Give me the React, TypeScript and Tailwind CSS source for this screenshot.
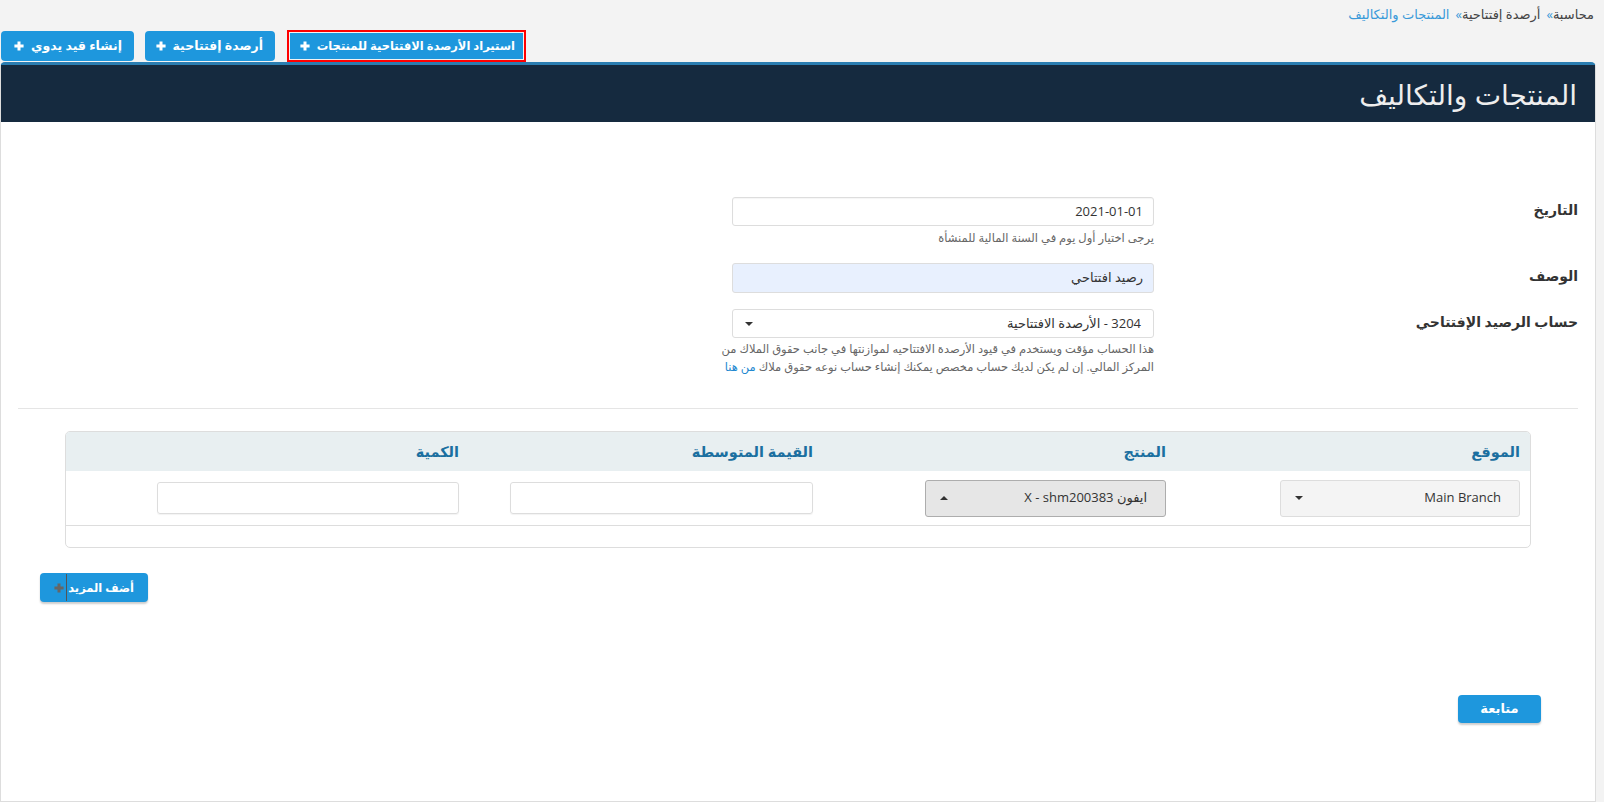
const font = { fontFamily: '"Open Sans", "DejaVu Sans", sans-serif' }

const PlusIcon = ({ className = '' }: { className?: string }) => (
	<svg viewBox="0 0 12 12" className={className} fill="currentColor">
		<path d="M4.2 0.5h3.6v3.7h3.7v3.6H7.8v3.7H4.2V7.8H0.5V4.2h3.7z" />
	</svg>
)

const TopButton = ({ label, className = '' }: { label: string; className?: string }) => (
	<button
		dir="rtl"
		className={`h-[30px] flex items-center gap-[7px] rounded-[4px] bg-[#1e97dd] text-white font-semibold whitespace-nowrap ${className}`}
	>
		<span>{label}</span>
		<PlusIcon className="w-[10px] h-[10px] shrink-0" />
	</button>
)

const CaretDown = () => (
	<span className="w-0 h-0 border-x-[4px] border-x-transparent border-t-[4px] border-t-[#333]" />
)

const CaretUp = () => (
	<span className="w-0 h-0 border-x-[4px] border-x-transparent border-b-[4px] border-b-[#333]" />
)

export default function App() {
	return (
		<div className="min-h-screen bg-[#f3f3f3] text-[#333]" style={font}>
			{/* breadcrumb */}
			<div dir="rtl" className="h-[30px] flex items-center pr-[10px] text-[13px]">
				<span className="text-[#444]">محاسبة</span>
				<span className="text-[#3a9ad9] ml-[6px]">»</span>
				<span className="text-[#444]">أرصدة إفتتاحية</span>
				<span className="text-[#3a9ad9] ml-[6px]">»</span>
				<span className="text-[#3a9ad9]">المنتجات والتكاليف</span>
			</div>

			{/* action buttons */}
			<div className="h-[32px] flex items-center pl-[1px]">
				<TopButton label="إنشاء قيد يدوي" className="w-[133px] text-[12.5px] pr-[12px]" />
				<TopButton label="أرصدة إفتتاحية" className="w-[130px] text-[12.5px] pr-[12px] ml-[11px]" />
				<div className="ml-[12px] h-[32px] w-[239px] border-2 border-[#ff0000] p-[1px]">
					<TopButton label="استيراد الأرصدة الافتتاحية للمنتجات" className="w-full h-full rounded-none text-[11.5px] pr-[8px]" />
				</div>
			</div>

			{/* panel */}
			<div className="mr-[8px] min-h-[740px] bg-white border border-[#ddd] border-t-[3px] border-t-[#2a7db1] rounded-t-[5px]">
				<div dir="rtl" className="h-[57px] bg-[#152a3f] flex items-center pr-[18px]">
					<h1 className="text-[28px] text-[#eee] font-normal leading-none">المنتجات والتكاليف</h1>
				</div>

				<div dir="rtl" className="px-[17px] pt-[75px]">
					{/* date */}
					<div className="flex mb-[16px]">
						<label className="w-[424px] text-[14px] font-semibold pt-[2px]">التاريخ</label>
						<div className="w-[450px]">
							<div className="w-[422px] h-[29px] border border-[#ddd] rounded-[3px] flex items-center px-[10px] text-[13px] shadow-[inset_0_1px_1px_rgba(0,0,0,0.04)]">
								2021-01-01
							</div>
							<p className="mt-[3px] text-[11.5px] leading-[18px] text-[#666]">يرجى اختيار أول يوم في السنة المالية للمنشأة</p>
						</div>
					</div>

					{/* description */}
					<div className="flex mb-[16px]">
						<label className="w-[424px] text-[14px] font-semibold pt-[2px]">الوصف</label>
						<div className="w-[450px]">
							<div className="w-[422px] h-[30px] border border-[#ddd] rounded-[3px] bg-[#e8f0fe] flex items-center px-[10px] text-[13px]">
								رصيد افتتاحي
							</div>
						</div>
					</div>

					{/* opening account */}
					<div className="flex">
						<label className="w-[424px] text-[14px] font-semibold pt-[2px]">حساب الرصيد الإفتتاحي</label>
						<div className="w-[450px]">
							<div className="w-[422px] h-[29px] border border-[#ddd] rounded-[3px] flex items-center justify-between px-[12px] text-[13px]">
								<span>3204 - الأرصدة الافتتاحية</span>
								<CaretDown />
							</div>
							<p className="mt-[2px] text-[11.5px] leading-[18px] text-[#666] whitespace-nowrap">
								هذا الحساب مؤقت ويستخدم في قيود الأرصدة الافتتاحيه لموازنتها في جانب حقوق الملاك من
								<br />
								المركز المالي. إن لم يكن لديك حساب مخصص يمكنك إنشاء حساب نوعه حقوق ملاك{' '}
								<a className="text-[#1e88d0]">من هنا</a>
							</p>
						</div>
					</div>

					<div className="mt-[32px] border-t border-[#e5e5e5]" />

					{/* products table */}
					<div className="mt-[22px] mx-[47px] border border-[#ddd] rounded-[5px] overflow-hidden">
						<div className="grid grid-cols-[354px_353px_354px_354px_1fr] h-[39px] bg-[#e8eff1] items-center text-[14.5px] font-bold text-[#1b6fa0]">
							<div className="pr-[10px]">الموقع</div>
							<div className="pr-[10px]">المنتج</div>
							<div className="pr-[10px]">القيمة المتوسطة</div>
							<div className="pr-[10px]">الكمية</div>
							<div />
						</div>
						<div className="grid grid-cols-[354px_353px_354px_354px_1fr] h-[55px] items-center border-b border-[#ddd]">
							<div className="pr-[10px]">
								<div className="w-[240px] h-[37px] bg-[#f4f4f4] border border-[#ddd] rounded-[3px] flex items-center justify-between pr-[18px] pl-[14px] text-[13px] text-[#333]">
									<span>Main Branch</span>
									<CaretDown />
								</div>
							</div>
							<div className="pr-[10px]">
								<div className="w-[241px] h-[37px] bg-[#e6e6e6] border border-[#adadad] rounded-[3px] flex items-center justify-between pr-[18px] pl-[14px] text-[13px] text-[#333]">
									<span>ايفون X - shm200383</span>
									<CaretUp />
								</div>
							</div>
							<div className="pr-[10px]">
								<div className="w-[303px] h-[32px] border border-[#ddd] rounded-[3px] shadow-[0_1px_1px_rgba(0,0,0,0.05)]" />
							</div>
							<div className="pr-[10px]">
								<div className="w-[302px] h-[32px] border border-[#ddd] rounded-[3px] shadow-[0_1px_1px_rgba(0,0,0,0.05)]" />
							</div>
							<div />
						</div>
						<div className="h-[21px]" />
					</div>
				</div>

				{/* add more */}
				<div className="px-[39px] mt-[25px]">
					<button dir="rtl" className="relative w-[108px] h-[29px] rounded-[4px] bg-[#1e97dd] text-white text-[11.5px] font-semibold whitespace-nowrap flex items-center justify-start gap-[4px] pr-[14px] shadow-[0_2px_2px_rgba(0,0,0,0.2)]">
						<span>أضف المزيد</span>
						<PlusIcon className="w-[10px] h-[10px] text-[#666] shrink-0" />
						<span className="absolute left-[26px] top-[1px] w-[1px] h-[27px] bg-[#555]" />
					</button>
				</div>

				{/* continue */}
				<div className="flex justify-end pr-[54px] mt-[93px]">
					<button className="w-[83px] h-[28px] rounded-[4px] bg-[#1e97dd] text-white text-[13px] font-semibold shadow-[0_2px_2px_rgba(0,0,0,0.2)]">
						متابعة
					</button>
				</div>
			</div>
		</div>
	)
}
